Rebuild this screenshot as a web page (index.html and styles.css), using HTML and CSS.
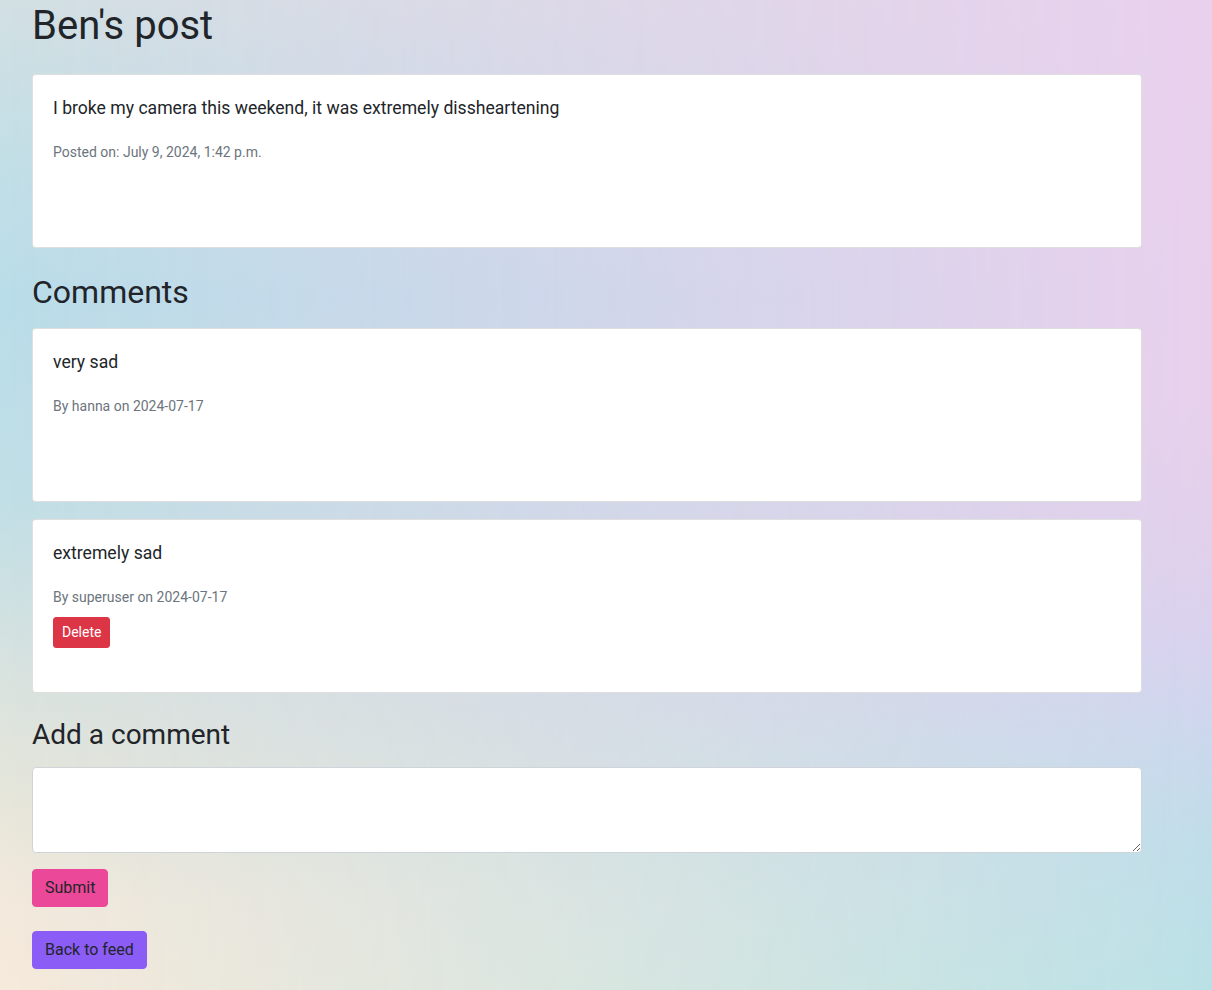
FILE: index.html
```html
<!DOCTYPE html>
<html lang="en">
<head>
<meta charset="utf-8">
<title>Ben's post</title>
<link rel="stylesheet" href="styles.css">
</head>
<body>
<main class="page">
  <h1 class="page-title">Ben's post</h1>

  <div class="card">
    <p class="card-text">I broke my camera this weekend, it was extremely dissheartening</p>
    <p class="meta">Posted on: July 9, 2024, 1:42 p.m.</p>
  </div>

  <h2 class="section-title">Comments</h2>

  <div class="card comment">
    <p class="card-text">very sad</p>
    <p class="meta">By hanna on 2024-07-17</p>
  </div>

  <div class="card comment">
    <p class="card-text">extremely sad</p>
    <p class="meta">By superuser on 2024-07-17</p>
    <button class="btn btn-delete" type="button">Delete</button>
  </div>

  <h3 class="form-title">Add a comment</h3>
  <form class="comment-form">
    <textarea class="textarea" rows="3"></textarea>
    <button class="btn btn-submit" type="button">Submit</button>
  </form>

  <a class="btn btn-back" href="#">Back to feed</a>
</main>
</body>
</html>
```

FILE: styles.css
```css
*, *::before, *::after { box-sizing: border-box; }

html, body { margin: 0; padding: 0; }

body {
  position: relative;
  min-height: 100vh;
  font-family: Roboto, "Liberation Sans", Arial, sans-serif;
  font-size: 16px;
  line-height: 1.5;
  color: #212529;
  background: linear-gradient(to bottom,
    #d2e0e3 0%,
    #c3dfe6 15%,
    #b9dde9 30%,
    #c0dfe6 50%,
    #dbe3de 70%,
    #e6e6da 81%,
    #f3e9dc 91%,
    #f6eadb 100%);
}

body::before {
  content: "";
  position: absolute;
  inset: 0;
  pointer-events: none;
  background: linear-gradient(to bottom,
    #e9d0ed 0%,
    #e8d0ec 40%,
    #e1d0ec 55%,
    #d8d2ee 65%,
    #cbd8ed 75%,
    #c0dde9 85%,
    #bae1e6 100%);
  -webkit-mask-image: linear-gradient(to right, transparent 0%, #000 100%);
  mask-image: linear-gradient(to right, transparent 0%, #000 100%);
}

.page {
  position: relative;
  width: 1110px;
  margin-left: 32px;
  padding-top: 2px;
  padding-bottom: 20px;
  display: flex;
  flex-direction: column;
  align-items: flex-start;
}

.page-title {
  margin: 0 0 24px;
  font-size: 40px;
  line-height: 48px;
  font-weight: 400;
}

.section-title {
  margin: 0 0 17px;
  padding-top: 1px;
  font-size: 32px;
  line-height: 38px;
  font-weight: 400;
}

.form-title {
  margin: 0 0 15px;
  padding-top: 1px;
  font-size: 28px;
  line-height: 34px;
  font-weight: 400;
}

.card {
  align-self: stretch;
  min-height: 174px;
  margin-bottom: 24px;
  padding: 20px;
  background: #fff;
  border: 1px solid rgba(0, 0, 0, 0.125);
  border-radius: 4px;
  display: flex;
  flex-direction: column;
  align-items: flex-start;
}

.card.comment { margin-bottom: 17px; }
.card.comment:last-of-type { margin-bottom: 24px; }

.card-text {
  margin: 2px 0 21px;
  font-size: 17.6px;
  line-height: 23.6px;
}

.meta {
  margin: 0 0 9px;
  font-size: 14px;
  line-height: 21px;
  color: #6c757d;
}

.btn {
  display: inline-block;
  font-family: inherit;
  font-size: 16px;
  line-height: 24px;
  padding: 6px 12px;
  border: 1px solid transparent;
  border-radius: 4px;
  color: #212529;
  text-decoration: none;
  cursor: pointer;
}

.btn-delete {
  font-size: 14px;
  line-height: 21px;
  padding: 4px 8px;
  border-radius: 3px;
  background: #dc3545;
  border-color: #dc3545;
  color: #fff;
}

.comment-form {
  align-self: stretch;
  display: flex;
  flex-direction: column;
  align-items: flex-start;
  gap: 16px;
  margin-bottom: 24px;
}

.textarea {
  display: block;
  width: 100%;
  height: 86px;
  padding: 6px 12px;
  font-family: inherit;
  font-size: 16px;
  line-height: 24px;
  color: #495057;
  background: #fff;
  border: 1px solid #ced4da;
  border-radius: 4px;
  resize: vertical;
}

.btn-submit {
  background: #ec4899;
  border-color: #ec4899;
}

.btn-back {
  background: #8b5cf6;
  border-color: #8b5cf6;
}
```
